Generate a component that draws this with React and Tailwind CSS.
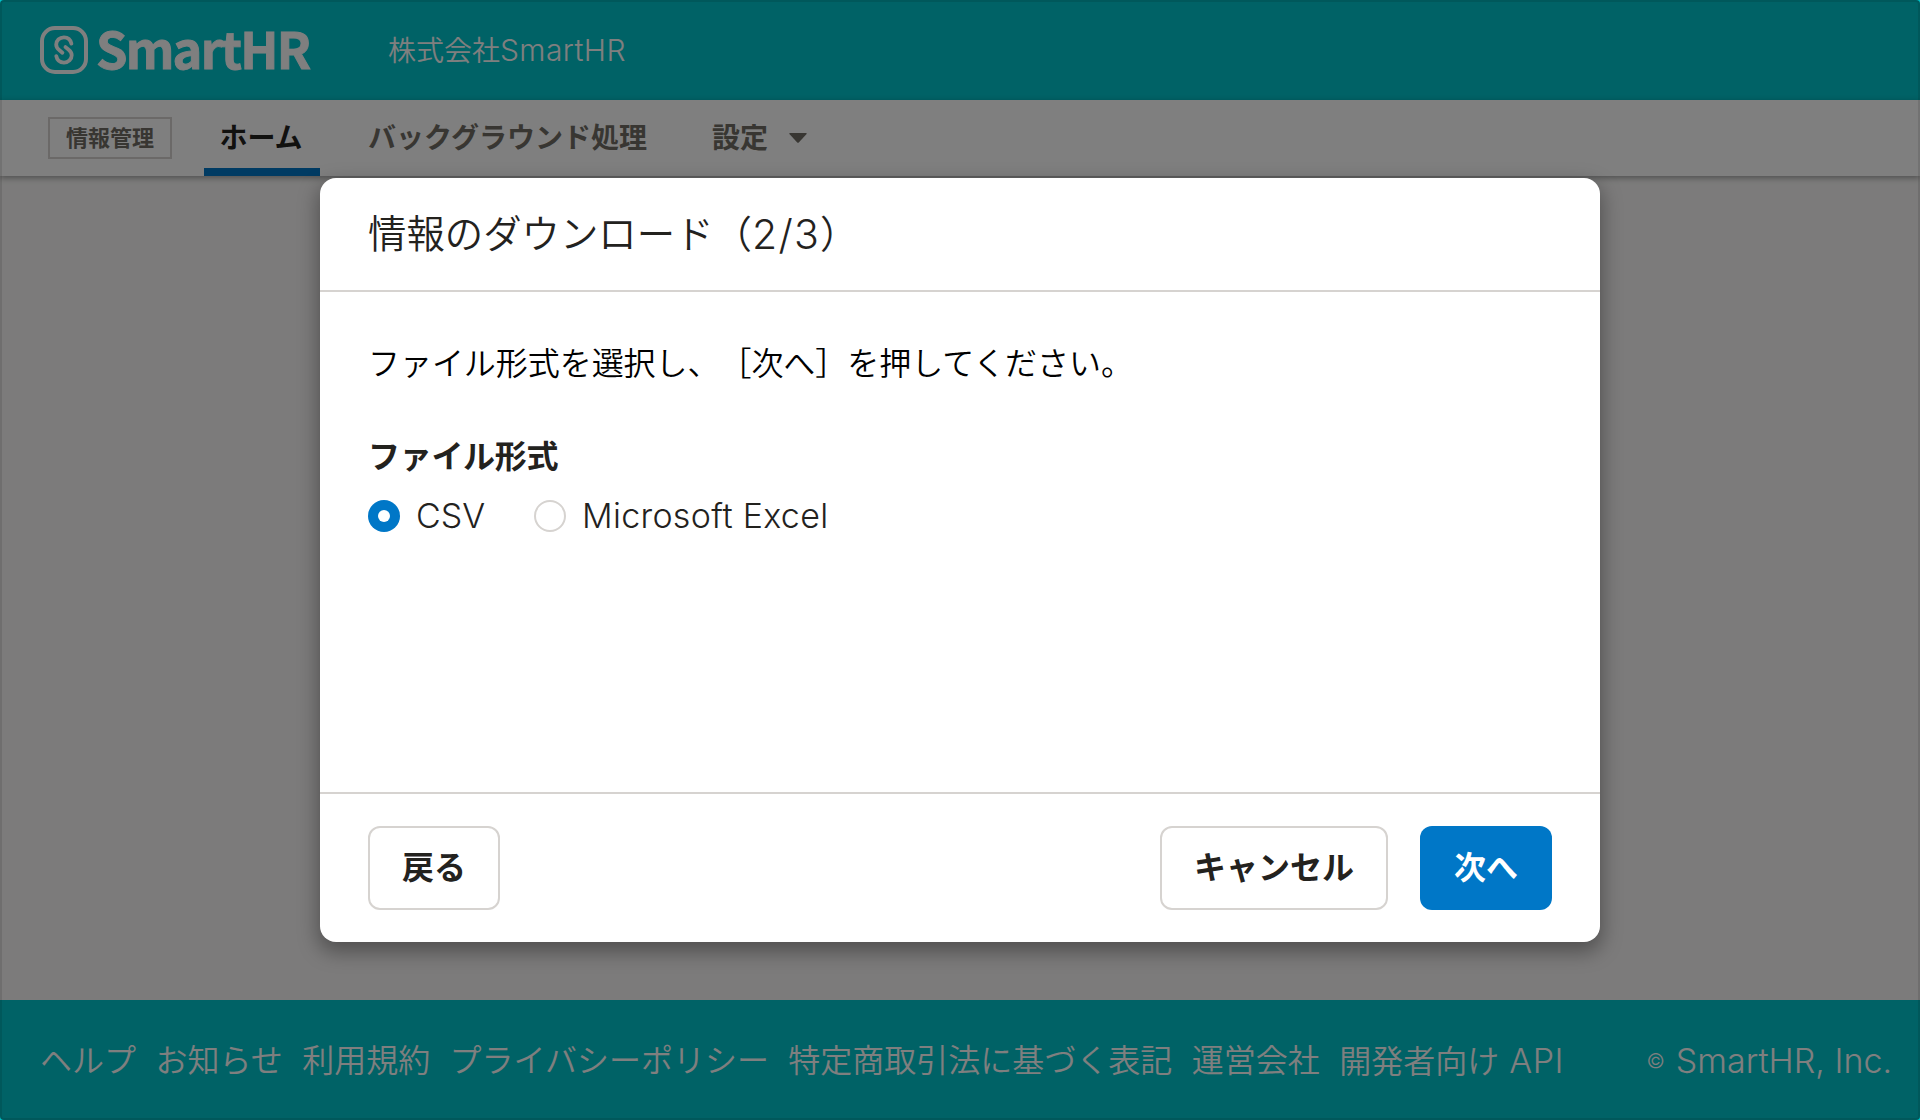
const footerLinks = [
  'ヘルプ',
  'お知らせ',
  '利用規約',
  'プライバシーポリシー',
  '特定商取引法に基づく表記',
  '運営会社',
];

function Logo() {
  return (
    <div className="flex items-center text-white">
      <svg width="48" height="48" viewBox="0 0 48 48" fill="none" stroke="currentColor">
        <rect x="2" y="2" width="44" height="44" rx="13" strokeWidth="4" />
        <g strokeWidth="3.8" strokeLinecap="round">
          <path d="M31.400 17.600C30.600 13.700 27.600 11.300 23.900 11.300c-4.400 0-7.700 3.300-7.700 7.300 0 2.500 1.200 4.100 3 5.500l3.200 2.700" />
          <path d="M16.300 30.200c.8 4 3.900 6.400 7.700 6.400 4.400 0 7.700-3.300 7.700-7.300 0-2.500-1.200-4.100-3-5.500l-3.200-2.700" />
        </g>
      </svg>
      <span className="mb-1.5 ml-2 w-[216px] font-['Noto_Sans_CJK_JP',sans-serif] text-[50.5px] leading-[60px] font-bold tracking-[-1.8px] whitespace-nowrap [-webkit-text-stroke:0.9px_white]">SmartHR</span>
    </div>
  );
}

function Radio({ label, checked, spacing }) {
  return (
    <label className="flex items-center">
      {checked ? (
        <span className="flex size-8 items-center justify-center rounded-full bg-[#0077c7]">
          <span className="size-3 rounded-full bg-white" />
        </span>
      ) : (
        <span className="size-8 rounded-full border-2 border-[#d6d3d0] bg-white" />
      )}
      <span className={`ml-4 text-[34px] leading-8 whitespace-nowrap ${spacing}`}>{label}</span>
    </label>
  );
}

function Button({ children, className }) {
  return (
    <button className={`flex h-[84px] items-center justify-center rounded-xl text-[32px] leading-8 font-bold whitespace-nowrap ${className}`}>
      {children}
    </button>
  );
}

export default function App() {
  return (
    <div
      lang="ja"
      className="relative flex h-[1120px] w-[1920px] flex-col overflow-hidden bg-[#f8f7f6] font-[Inter,'Noto_Sans_CJK_JP',sans-serif] font-[350] text-[#23221e] [text-spacing-trim:space-all]"
    >
      <header className="flex h-[100px] shrink-0 items-center bg-[#00c4cc] pl-10">
        <Logo />
        <span className="ml-[76px] pt-px text-[28px] leading-none text-white">
          株式会社<span className="text-[30px] leading-7 tracking-[0.4px]">SmartHR</span>
        </span>
      </header>
      <nav className="flex h-[76px] shrink-0 items-center bg-white pl-12 text-[28px] font-bold text-[#706d65] shadow-[0_2px_6px_rgba(0,0,0,0.36)]">
        <span className="flex h-[42px] w-[124px] items-center justify-center border-2 border-[#d6d3d0] text-[22px] leading-none">情報管理</span>
        <span className="ml-8 flex h-full w-[116px] items-center justify-center border-b-8 border-[#0077c7] pt-2 pr-0.5 text-[#23221e]">ホーム</span>
        <span className="ml-12">バックグラウンド処理</span>
        <span className="ml-[65px]">設定</span>
        <svg className="ml-[21px]" width="18" height="10" viewBox="0 0 18 10" fill="currentColor">
          <path d="M1 0h16q1 0 .6 1L10 9.300q-1 1-2 0L.400 1Q0 0 1 0z" />
        </svg>
      </nav>
      <main className="flex-1" />
      <footer className="flex h-[120px] shrink-0 items-center justify-between bg-[#00c4cc] pt-0.5 pr-7 pl-10 text-[32px] leading-none whitespace-nowrap text-white">
        <div className="flex gap-[19.4px]">
          {footerLinks.map((t) => (
            <span key={t}>{t}</span>
          ))}
          <span>
            開発者向け<span className="text-[34px] leading-8 tracking-[0.5px]"> API</span>
          </span>
        </div>
        <span className="flex items-center text-[34px] leading-8">
          <span className="mr-[11px] text-[20px]">©</span>SmartHR, Inc.
        </span>
      </footer>

      <div className="absolute inset-0 flex items-start justify-center rounded border-2 border-black/10 bg-black/50 pt-[176px]">
        <section className="flex h-[764px] w-[1280px] flex-col rounded-2xl bg-white shadow-[0_8px_20px_2px_rgba(0,0,0,0.35)]">
          <h1 className="flex h-[114px] shrink-0 items-center border-b-2 border-[#d6d3d0] px-12 text-[38.4px] leading-none">
            情報のダウンロード（<span className="text-[41px] tracking-[1.3px]">2/3</span>）
          </h1>
          <div className="flex flex-1 flex-col px-12 pt-14">
            <p className="text-[32px] leading-8 tracking-[-0.05px] text-black">ファイル形式を選択し、［次へ］を押してください。</p>
            <h2 className="mt-[61px] text-[32px] leading-8 font-bold tracking-[-0.3px]">ファイル形式</h2>
            <div className="mt-[27px] flex gap-12">
              <Radio label="CSV" checked spacing="w-[70px]" />
              <Radio label="Microsoft Excel" spacing="tracking-[0.3px]" />
            </div>
          </div>
          <div className="flex h-[150px] shrink-0 items-center border-t-2 border-[#d6d3d0] px-12">
            <Button className="w-[132px] border-2 border-[#d6d3d0]">戻る</Button>
            <Button className="ml-auto w-[228px] border-2 border-[#d6d3d0]">キャンセル</Button>
            <Button className="ml-8 w-[132px] bg-[#0077c7] text-white">次へ</Button>
          </div>
        </section>
      </div>
    </div>
  );
}
